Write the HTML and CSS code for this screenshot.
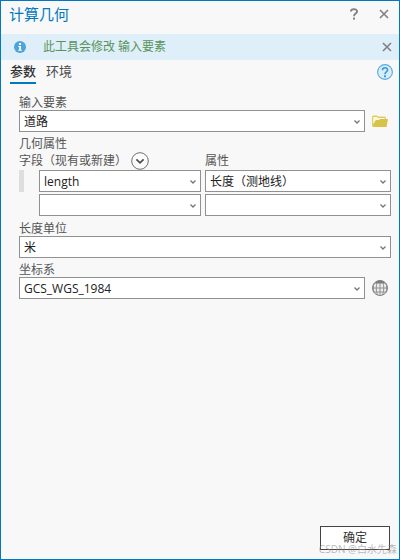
FILE: index.html
```html
<!DOCTYPE html>
<html lang="zh-CN">
<head>
<meta charset="UTF-8" />
<meta name="viewport" content="width=device-width, initial-scale=1" />
<title>计算几何</title>
<link rel="stylesheet" href="styles.css">
</head>
<body>

<svg class="sprite" aria-hidden="true">
  <symbol id="chevron" viewBox="0 0 8 8">
    <path d="M1.5 2.5 L4 5 L6.5 2.5" fill="none" stroke="#777" stroke-width="1.3" />
  </symbol>
  <symbol id="close" viewBox="0 0 10 10">
    <path d="M1 1 L9 9 M9 1 L1 9" fill="none" stroke="#808080" stroke-width="1.6" />
  </symbol>
</svg>

<main class="dialog">
  <header class="title-bar">
    <h1>计算几何</h1>
    <button class="icon-btn" type="button" aria-label="帮助">
      <svg width="10" height="12" viewBox="0 0 10 12">
        <path d="M1.9 3.6 C1.9 0.4 8.1 0.4 8.1 3.5 C8.1 5.6 5 5.6 5 8.2" fill="none" stroke="#808080" stroke-width="1.8" />
        <rect x="4" y="9.6" width="2" height="2" fill="#808080" />
      </svg>
    </button>
    <button class="icon-btn" type="button" aria-label="关闭">
      <svg width="10" height="10"><use href="#close" /></svg>
    </button>
  </header>

  <div class="notice" role="status">
    <svg width="12" height="12" viewBox="0 0 12 12" aria-hidden="true">
      <circle cx="6" cy="6" r="6" fill="#4da3dc" />
      <path d="M5 2 H7 V4 H5 Z M4.4 5 H7 V8.8 H7.8 V9.8 H4.2 V8.8 H5.2 V6 H4.4 Z" fill="#fff" />
    </svg>
    <p>此工具会修改 输入要素</p>
    <button class="icon-btn" type="button" aria-label="关闭消息">
      <svg width="10" height="10"><use href="#close" /></svg>
    </button>
  </div>

  <nav class="tabs">
    <a class="tab active" href="#params" aria-current="page">参数</a>
    <a class="tab" href="#environments">环境</a>
    <button class="icon-btn tool-help" type="button" aria-label="工具帮助">
      <svg width="16" height="16" viewBox="0 0 16 16">
        <circle cx="8" cy="8" r="7.4" fill="#d9eefb" stroke="#56aade" stroke-width="1.1" />
        <path d="M5.5 6.2 C5.5 3 10.6 3 10.6 6 C10.6 8 8 7.9 8 10.2" fill="none" stroke="#3f9cd8" stroke-width="1.7" />
        <rect x="7" y="11.3" width="2" height="2" fill="#3f9cd8" />
      </svg>
    </button>
  </nav>

  <form class="params" id="params">
    <div class="field">
      <label for="input-features">输入要素</label>
      <div class="with-action">
        <div class="combo">
          <select id="input-features"><option>道路</option></select>
          <svg width="8" height="8"><use href="#chevron" /></svg>
        </div>
        <button class="icon-btn" type="button" aria-label="浏览">
          <svg width="16" height="12" viewBox="0 0 16 12">
            <path d="M0 11 V1.5 L1 0.5 H5 L6 1.5 H13 L14 2.5 V11 Z" fill="#e0cd5c" />
            <path d="M1.2 9 V2 H5 L6 3 H12.8 V5 H4 Z" fill="#fbf8e2" />
            <path d="M0.5 12 L4 5 H7 L8 4 H16 L14.5 12 Z" fill="#d9c24a" />
          </svg>
        </button>
      </div>
    </div>

    <fieldset class="field attributes">
      <legend>几何属性</legend>
      <div class="columns column-heads">
        <div class="head">
          <span id="head-field">字段（现有或新建）</span>
          <button class="icon-btn" type="button" aria-label="添加多个">
            <svg width="18" height="18" viewBox="0 0 18 18">
              <circle cx="9" cy="9" r="8.3" fill="#fcfcfc" stroke="#707070" />
              <path d="M5.4 7.4 L9 10.8 L12.6 7.4" fill="none" stroke="#4c4c4c" stroke-width="1.8" />
            </svg>
          </button>
        </div>
        <span id="head-property">属性</span>
      </div>
      <div class="columns">
        <div class="row-lead">
          <span class="handle"></span>
          <div class="combo">
            <select aria-labelledby="head-field"><option>length</option></select>
            <svg width="8" height="8"><use href="#chevron" /></svg>
          </div>
        </div>
        <div class="combo">
          <select aria-labelledby="head-property"><option>长度（测地线）</option></select>
          <svg width="8" height="8"><use href="#chevron" /></svg>
        </div>
      </div>
      <div class="columns">
        <div class="row-lead">
          <div class="combo">
            <select aria-labelledby="head-field"><option></option></select>
            <svg width="8" height="8"><use href="#chevron" /></svg>
          </div>
        </div>
        <div class="combo">
          <select aria-labelledby="head-property"><option></option></select>
          <svg width="8" height="8"><use href="#chevron" /></svg>
        </div>
      </div>
    </fieldset>

    <div class="field">
      <label for="length-unit">长度单位</label>
      <div class="combo">
        <select id="length-unit"><option>米</option></select>
        <svg width="8" height="8"><use href="#chevron" /></svg>
      </div>
    </div>

    <div class="field">
      <label for="coord-system">坐标系</label>
      <div class="with-action">
        <div class="combo">
          <select id="coord-system"><option>GCS_WGS_1984</option></select>
          <svg width="8" height="8"><use href="#chevron" /></svg>
        </div>
        <button class="icon-btn" type="button" aria-label="选择坐标系">
          <svg width="16" height="16" viewBox="0 0 16 16">
            <circle cx="8" cy="8" r="7.5" fill="#ececec" stroke="#808080" />
            <path d="M2.5 3.5 C5 -0.5 11 -0.5 13.5 3.5 Z" fill="#777" />
            <path d="M8 1 V15 M1 8 H15 M2 12 H14" fill="none" stroke="#8a8a8a" stroke-width="0.9" />
            <path d="M5.5 1 C3.8 5 3.8 11 5.5 15 M10.5 1 C12.2 5 12.2 11 10.5 15" fill="none" stroke="#8a8a8a" stroke-width="0.9" />
            <path d="M2.4 3 C0.8 6 0.8 10 2.4 13 M13.6 3 C15.2 6 15.2 10 13.6 13" fill="none" stroke="#8a8a8a" />
          </svg>
        </button>
      </div>
    </div>
  </form>

  <footer class="actions">
    <button class="ok-btn" type="button">确定</button>
    <span class="watermark">CSDN @白水先森</span>
  </footer>
</main>

</body>
</html>
```

FILE: styles.css
```css
* {
  box-sizing: border-box;
}

body {
  margin: 0;
  font-family: "Open Sans", "Noto Sans CJK SC", sans-serif;
  font-size: 12px;
  line-height: 16px;
  color: #555;
  background-color: #f8f8f8;
}

button,
select {
  font: inherit;
}

svg {
  display: block;
}

.sprite {
  display: none;
}

.dialog {
  min-height: 100vh;
  display: flex;
  flex-direction: column;
  border: 1px solid #0079c1;
}

.icon-btn {
  display: flex;
  flex: none;
  padding: 0;
  border: none;
  background: transparent;
  cursor: pointer;
}

/* title bar */
.title-bar {
  display: flex;
  align-items: center;
  gap: 20px;
  height: 33px;
  padding: 0 10px 8px 8px;
}

.title-bar h1 {
  flex: 1;
  margin: 0;
  font-size: 15px;
  font-weight: 400;
  line-height: 24px;
  color: #0079c1;
}

.notice {
  display: flex;
  align-items: center;
  height: 26px;
  padding: 0 7px 0 13px;
  background-color: #deeffa;
}

.notice p {
  flex: 1;
  margin: 0 0 0 17px;
  color: #5a935a;
}

/* tabs */
.tabs {
  display: flex;
  align-items: flex-start;
  gap: 10px;
  padding: 2px 6px 0 9px;
}

.tab {
  height: 22px;
  font-size: 13px;
  line-height: 18px;
  color: #4c4c4c;
  text-decoration: none;
}

.tab.active {
  font-weight: 500;
  color: #323232;
  border-bottom: 2px solid #0079c1;
}

.tool-help {
  margin: 2px 0 0 auto;
}

/* parameters */
.params {
  flex: 1;
  display: flex;
  flex-direction: column;
  gap: 3px;
  padding: 10px 8px 0 18px;
}

.field {
  min-width: 0;
  margin: 0;
  padding: 0;
  border: none;
}

.field label,
.field legend {
  display: block;
  padding: 2px 0 0;
  line-height: 14px;
}

.attributes {
  padding: 1px 0;
}

.combo {
  position: relative;
  flex: 1;
  min-width: 0;
}

.combo select {
  display: block;
  width: 100%;
  height: 22px;
  padding: 2px 20px 0 4px;
  border: 1px solid #919191;
  border-radius: 0;
  background-color: #fff;
  color: #222;
  appearance: none;
}

.combo svg {
  position: absolute;
  right: 4px;
  top: 8px;
  pointer-events: none;
}

.with-action {
  display: grid;
  grid-template-columns: 1fr 19px;
  gap: 7px;
  align-items: center;
}

.columns {
  display: grid;
  grid-template-columns: 182fr 186fr;
  gap: 4px;
}

.columns + .columns {
  margin-top: 2px;
}

.column-heads + .columns {
  margin-top: 0;
}

.column-heads {
  align-items: center;
}

.head {
  display: flex;
  align-items: center;
  gap: 4px;
}

.row-lead {
  display: flex;
  padding-left: 20px;
}

.handle {
  width: 5px;
  margin: 0 15px 0 -20px;
  background-color: #dedede;
}

/* footer */
.actions {
  position: relative;
  display: flex;
  justify-content: flex-end;
  padding: 0 9px 9px;
}

.ok-btn {
  width: 70px;
  height: 24px;
  padding: 0;
  border: 1px solid #444;
  background-color: #fff;
  color: #323232;
}

.watermark {
  position: absolute;
  right: 2px;
  bottom: 2px;
  font-size: 10px;
  color: rgba(140, 140, 140, 0.6);
  white-space: nowrap;
  pointer-events: none;
}
```
